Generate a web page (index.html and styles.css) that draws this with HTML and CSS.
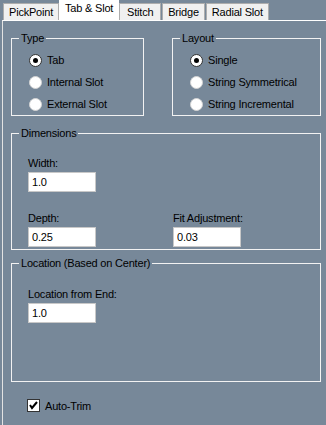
FILE: index.html
```html
<!DOCTYPE html>
<html lang="en">
  <head>
    <meta charset="UTF-8" />
    <title>Tab &amp; Slot</title>
    <link rel="stylesheet" href="styles.css">
  </head>
  <body>
    <div class="tabs">
      <div class="tab">PickPoint</div>
      <div class="tab active">Tab &amp; Slot</div>
      <div class="tab">Stitch</div>
      <div class="tab">Bridge</div>
      <div class="tab">Radial Slot</div>
    </div>

    <div class="panel">
      <div class="topRow">
        <fieldset class="group type">
          <legend>Type</legend>
          <div class="options">
            <label class="radio"><span class="dot checked"></span>Tab</label>
            <label class="radio"><span class="dot"></span>Internal Slot</label>
            <label class="radio"><span class="dot"></span>External Slot</label>
          </div>
        </fieldset>

        <fieldset class="group layout">
          <legend>Layout</legend>
          <div class="options">
            <label class="radio"><span class="dot checked"></span>Single</label>
            <label class="radio"><span class="dot"></span>String Symmetrical</label>
            <label class="radio"><span class="dot"></span>String Incremental</label>
          </div>
        </fieldset>
      </div>

      <fieldset class="group dimensions">
        <legend>Dimensions</legend>
        <div class="fields">
          <div class="field">
            <label>Width:</label>
            <input type="text" value="1.0" />
          </div>
          <div></div>
          <div class="field">
            <label>Depth:</label>
            <input type="text" value="0.25" />
          </div>
          <div class="field">
            <label>Fit Adjustment:</label>
            <input type="text" value="0.03" />
          </div>
        </div>
      </fieldset>

      <fieldset class="group location">
        <legend>Location (Based on Center)</legend>
        <div class="field">
          <label>Location from End:</label>
          <input type="text" value="1.0" />
        </div>
      </fieldset>

      <label class="check">
        <span class="box">
          <svg width="11" height="11" viewBox="0 0 11 11">
            <polyline points="2,5 4,8 9,2" fill="none" stroke="#000" stroke-width="2" />
          </svg>
        </span>
        Auto-Trim
      </label>
    </div>
  </body>
</html>
```

FILE: styles.css
```css
body {
  margin: 0;
  background-color: #778899;
  font-family: "Liberation Sans", Arial, sans-serif;
  font-size: 11px;
  letter-spacing: -0.2px;
  color: #000;
  height: 425px;
  overflow: hidden;
}

.tabs {
  display: flex;
  align-items: flex-end;
  height: 20px;
  padding-left: 3px;
}
.tab {
  height: 16px;
  line-height: 17px;
  min-width: 30px;
  text-align: center;
  padding: 0 5px;
  background-color: #f0f0f0;
  border: 1px solid #adadad;
  border-bottom: none;
  margin-right: 1px;
}
.tab.active {
  height: 20px;
  line-height: 17px;
  background-color: #fff;
  border-color: #fff;
  margin: 0 0 -1px -1px;
  padding: 0 5px 1px;
  position: relative;
}

.panel {
  margin-left: 2px;
  border-top: 1px solid #fff;
  border-left: 1px solid #e3e3e3;
  padding: 11px 0 0 8px;
  height: 400px;
}

.group {
  margin: 0;
  padding: 0;
  border: 1px solid #f2f2f2;
  min-width: 0;
  box-sizing: border-box;
}
.group legend {
  margin-left: 7px;
  padding: 0 2px;
  line-height: 13px;
}

.topRow {
  display: flex;
  gap: 28px;
}
.type {
  width: 133px;
}
.layout {
  width: 149px;
}
.options {
  padding: 4px 0 0 17px;
}

.radio {
  display: flex;
  align-items: center;
  height: 22px;
}
.dot {
  width: 11px;
  height: 11px;
  border-radius: 50%;
  background-color: #fff;
  border: 1px solid #d5d5d5;
  margin-right: 5px;
  display: flex;
  align-items: center;
  justify-content: center;
}
.dot.checked {
  border-color: #333;
}
.dot.checked::after {
  content: "";
  width: 5px;
  height: 5px;
  border-radius: 50%;
  background-color: #000;
}

.dimensions {
  width: 310px;
  margin-top: 11px;
}
.fields {
  display: grid;
  grid-template-columns: 145px auto;
  row-gap: 20px;
  padding: 17px 0 2px 16px;
}
.field {
  display: flex;
  flex-direction: column;
  align-items: flex-start;
  gap: 2px;
}
.field label {
  line-height: 13px;
}
.field input {
  width: 68px;
  height: 20px;
  box-sizing: border-box;
  border: 1px solid #c8c8c8;
  background-color: #fff;
  font-family: inherit;
  font-size: 11px;
  letter-spacing: inherit;
  padding: 0 3px;
  margin: 0;
  color: #000;
}

.location {
  width: 310px;
  margin-top: 7px;
}
.location .field {
  padding: 18px 0 58px 16px;
}

.check {
  display: flex;
  align-items: center;
  gap: 5px;
  margin: 17px 0 0 16px;
}
.box {
  width: 11px;
  height: 11px;
  border: 1px solid #333;
  background-color: #fff;
  display: flex;
}
```
